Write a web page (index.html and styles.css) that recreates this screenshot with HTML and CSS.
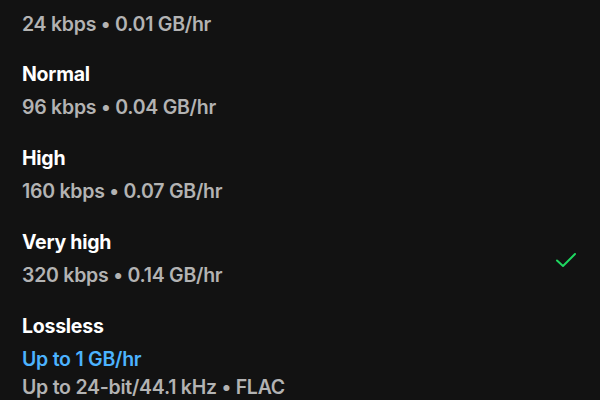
FILE: index.html
```html
<!DOCTYPE html>
<html lang="en">
<head>
  <meta charset="UTF-8" />
  <meta name="viewport" content="width=device-width, initial-scale=1.0"/>
  <title>Audio Quality</title>
  <link rel="stylesheet" href="styles.css">
</head>
<body>

  <ul class="quality-list">
    <li class="option partial">
      <div class="info">
        <span class="detail">24 kbps • 0.01 GB/hr</span>
      </div>
    </li>
    <li class="option">
      <div class="info">
        <span class="title">Normal</span>
        <span class="detail">96 kbps • 0.04 GB/hr</span>
      </div>
    </li>
    <li class="option">
      <div class="info">
        <span class="title">High</span>
        <span class="detail">160 kbps • 0.07 GB/hr</span>
      </div>
    </li>
    <li class="option selected">
      <div class="info">
        <span class="title">Very high</span>
        <span class="detail">320 kbps • 0.14 GB/hr</span>
      </div>
      <svg class="check" width="24" height="24" viewBox="0 0 24 24">
        <path d="M3 12.5l6 5.5L21 6" fill="none" stroke="#1ed760" stroke-width="2" stroke-linecap="round" stroke-linejoin="round"/>
      </svg>
    </li>
    <li class="option">
      <div class="info">
        <span class="title">Lossless</span>
        <span class="highlight">Up to 1 GB/hr</span>
        <span class="detail">Up to 24-bit/44.1 kHz • FLAC</span>
      </div>
    </li>
  </ul>

</body>
</html>
```

FILE: styles.css
```css
body {
  margin: 0;
  background: #121212;
  font-family: Inter, 'Noto Sans', sans-serif;
  overflow: hidden;
}

.quality-list {
  list-style-type: none;
  margin: 0;
  padding: 9px 22px 0;
  display: flex;
  flex-direction: column;
  gap: 21px;
}

.option {
  display: flex;
  align-items: center;
  justify-content: space-between;
}

.option.partial {
  margin-bottom: -1px;
}

.info {
  display: flex;
  flex-direction: column;
  gap: 3px;
}

.info span {
  line-height: 30px;
  font-size: 19.5px;
  letter-spacing: -0.25px;
}

.title {
  color: #ffffff;
  font-weight: 700;
}

.detail {
  color: #b3b3b3;
  font-weight: 600;
}

.highlight {
  color: #4cb3ff;
  font-weight: 600;
}

.highlight + .detail {
  margin-top: -5px;
}

.check {
  margin-top: 3px;
}
```
